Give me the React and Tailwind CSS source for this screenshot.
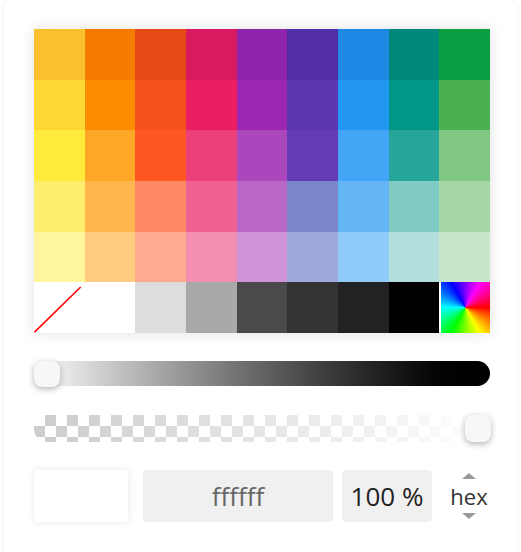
import React from 'react';

const ROWS = [
  ['#fbc02d', '#f57c00', '#e64a19', '#d81b60', '#8e24aa', '#512da8', '#1e88e5', '#00897b', '#0a9e43'],
  ['#fdd835', '#fb8c00', '#f4511e', '#e91e63', '#9c27b0', '#5e35b1', '#2196f3', '#009688', '#4caf50'],
  ['#ffeb3b', '#ffa726', '#ff5722', '#ec407a', '#ab47bc', '#673ab7', '#42a5f5', '#26a69a', '#81c784'],
  ['#ffee6e', '#ffb74d', '#ff8a65', '#f06292', '#ba68c8', '#7986cb', '#64b5f6', '#80cbc4', '#a5d6a7'],
  ['#fff59d', '#ffcc80', '#ffab91', '#f48fb1', '#ce93d8', '#9fa8da', '#90caf9', '#b2dfdb', '#c8e6c9'],
];

const GRAYS = ['#ffffff', '#dddddd', '#a9a9a9', '#4a4a4a', '#333333', '#222222', '#000000'];

function Swatch({ color }) {
  return <div className="w-full h-full" style={{ backgroundColor: color }} />;
}

export default function App() {
  return (
    <div className="w-[521px] h-[552px] bg-white overflow-hidden font-['Open_Sans',sans-serif]">
      <div className="mx-1 h-[560px] rounded-lg bg-white shadow-[0_0_6px_rgba(0,0,0,0.06)] pt-[29px] pl-[30px]">
        {/* palette */}
        <div className="w-[456px] h-[304px] grid grid-cols-9 grid-rows-6 shadow-[0_0_14px_rgba(0,0,0,0.12)]">
          {ROWS.flat().map((c, i) => (
            <Swatch key={i} color={c} />
          ))}
          <div className="bg-white relative">
            <svg className="absolute inset-0" width="100%" height="100%" viewBox="0 0 51 51">
              <line x1="0.5" y1="50.5" x2="47" y2="5" stroke="#ff0000" strokeWidth="1.6" />
            </svg>
          </div>
          {GRAYS.map((c, i) => (
            <Swatch key={'g' + i} color={c} />
          ))}
          <div className="border-l-2 border-white bg-[conic-gradient(from_90deg,#ff0000,#ffff00,#00ff00,#00ffff,#0000ff,#ff00ff,#ff0000)]" />
        </div>

        {/* lightness slider */}
        <div className="relative w-[456px] h-[26px] mt-[28px]">
          <div className="w-full h-[25px] rounded-full bg-gradient-to-r from-white to-black" />
          <div className="absolute left-0 top-0 w-[26px] h-[26px] rounded-lg bg-[#f7f7f7] shadow-[0_2px_6px_rgba(0,0,0,0.3)]" />
        </div>

        {/* alpha slider */}
        <div className="relative w-[457px] h-[27px] mt-[28px]">
          <div className="w-full h-full rounded-full overflow-hidden bg-[conic-gradient(#cccccc_25%,#ffffff_0_50%,#cccccc_0_75%,#ffffff_0)] bg-[length:22px_22px]">
            <div className="w-full h-full bg-gradient-to-r from-transparent via-[rgba(255,255,255,0.5)] to-white" />
          </div>
          <div className="absolute right-0 top-0 w-[26px] h-[27px] rounded-lg bg-[#f7f7f7] shadow-[0_2px_6px_rgba(0,0,0,0.3)]" />
        </div>

        {/* inputs */}
        <div className="flex items-center mt-[28px] h-[52px]">
          <div className="w-[94px] h-[52px] rounded bg-white shadow-[0_0_8px_rgba(0,0,0,0.1)]" />
          <div className="ml-[15px] w-[190px] h-[52px] rounded bg-[#f0f0f0] flex items-center justify-center text-[26px] text-[#666666]">
            ffffff
          </div>
          <div className="ml-[9px] w-[90px] h-[52px] rounded bg-[#f0f0f0] flex items-center justify-center text-[26px] text-[#222222]">
            100 %
          </div>
          <div className="ml-[18px] w-[38px] flex flex-col items-center">
            <div className="w-0 h-0 border-l-[7px] border-r-[7px] border-b-[6px] border-l-transparent border-r-transparent border-b-[#999999]" />
            <div className="text-[22px] leading-[28px] text-[#333333] my-[3px]">hex</div>
            <div className="w-0 h-0 border-l-[7px] border-r-[7px] border-t-[6px] border-l-transparent border-r-transparent border-t-[#999999]" />
          </div>
        </div>
      </div>
    </div>
  );
}
